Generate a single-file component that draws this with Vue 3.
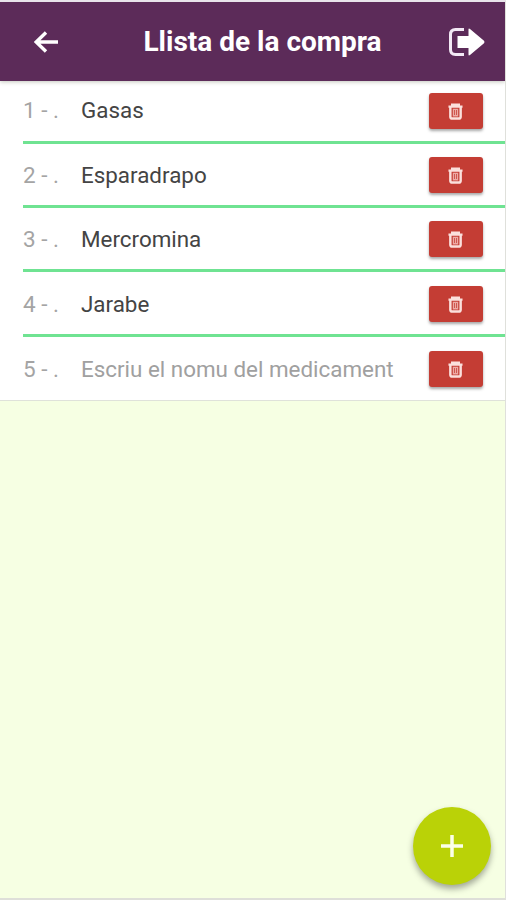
<template>
  <div class="page">
    <header class="toolbar">
      <button class="icon-button" aria-label="Enrere">
        <svg class="back" viewBox="0 0 24 22">
          <path d="M12 1.5 2.2 11 12 20.5M2.5 11H24" />
        </svg>
      </button>
      <h1 class="title">Llista de la compra</h1>
      <button class="icon-button" aria-label="Sortir">
        <svg class="exit" viewBox="0 0 36 28">
          <path class="door" d="M15 1.5H6.5Q1.5 1.5 1.5 6.5V21.5Q1.5 26.5 6.5 26.5H15" />
          <path class="arrow" d="M8.5 8H19.5V1.5Q19.5 0 21 1L35 12.8Q36 14 35 15.2L21 27Q19.5 28 19.5 26.5V20H8.5Z" />
        </svg>
      </button>
    </header>

    <ul class="list">
      <li class="item" v-for="(item, index) in items" :key="index">
        <span class="number">{{ index + 1 }} - .</span>
        <input class="name" v-model="item.name" placeholder="Escriu el nomu del medicament" />
        <button class="delete" aria-label="Esborrar" @click="removeItem(index)">
          <svg class="trash" viewBox="0 0 16 18">
            <path d="M0.5 3.8H15.5M4.5 3.5V1.7H11.5V3.5M2.5 4V14.5Q2.5 16.5 4.5 16.5H11.5Q13.5 16.5 13.5 14.5V4" />
            <path class="slats" d="M5.8 6.8V13.5H10.2V6.8ZM8 6.8V13.5" />
          </svg>
        </button>
      </li>
    </ul>

    <button class="fab" aria-label="Afegir" @click="addItem">
      <svg class="plus" viewBox="0 0 22 22">
        <path d="M11 0V22M0 11H22" />
      </svg>
    </button>
  </div>
</template>

<script setup>
import { ref } from 'vue'

const items = ref([
  { name: 'Gasas' },
  { name: 'Esparadrapo' },
  { name: 'Mercromina' },
  { name: 'Jarabe' },
  { name: '' }
])

const addItem = () => {
  items.value.push({ name: '' })
}

const removeItem = (index) => {
  items.value.splice(index, 1)
}
</script>

<style>
body {
  margin: 0;
}
</style>

<style scoped>
.page {
  position: relative;
  box-sizing: border-box;
  height: 900px;
  overflow: hidden;
  border-top: 2px solid #e9e4eb;
  border-right: 1px solid #dfe0db;
  border-bottom: 2px solid #dedfd9;
  background: #f6ffe3;
  font-family: Roboto, sans-serif;
}

button {
  padding: 0;
  border: 0;
  background: none;
  cursor: pointer;
}

svg {
  display: block;
}

.toolbar {
  position: relative;
  display: flex;
  align-items: center;
  justify-content: space-between;
  box-sizing: border-box;
  height: 79px;
  padding: 0 20px 0 34px;
  background: #5c2b59;
  box-shadow: 0 1px 4px rgba(60, 70, 40, 0.3);
}

.back {
  width: 24px;
  height: 22px;
  fill: none;
  stroke: #fff;
  stroke-width: 3.4;
}

.title {
  margin: 0 0 0 18px;
  color: #fff;
  font-size: 28px;
  font-weight: 700;
  white-space: nowrap;
}

.exit {
  width: 36px;
  height: 28px;
}

.door {
  fill: none;
  stroke: #f3e9f5;
  stroke-width: 3;
}

.arrow {
  fill: #fff;
}

.list {
  margin: 0;
  padding: 0;
  list-style: none;
  background: #fff;
  border-bottom: 1px solid #dfe2da;
}

.item {
  display: flex;
  align-items: center;
  box-sizing: border-box;
  height: 64.4px;
  margin-left: 23px;
  padding: 1.6px 22px 0 0;
  border-bottom: 3px solid #6fe392;
}

.item:first-child {
  height: 62.5px;
  padding-top: 0;
}

.item:first-child .number,
.item:first-child .name {
  padding-bottom: 2px;
}

.item:last-child {
  height: 63.3px;
  border-bottom: 0;
}

.number {
  width: 58px;
  color: #a4a4a4;
  font-size: 22.5px;
}

.name {
  flex: 1;
  min-width: 0;
  padding: 0;
  border: 0;
  outline: 0;
  background: none;
  color: #444;
  font-family: inherit;
  font-size: 22.4px;
}

.name::placeholder {
  color: #a0a0a0;
  opacity: 1;
}

.delete {
  display: flex;
  align-items: center;
  justify-content: center;
  box-sizing: border-box;
  width: 54px;
  height: 36px;
  padding: 1px 2px 0 0;
  border-radius: 3px;
  background: #c43d34;
  box-shadow: 0 2px 3px rgba(0, 0, 0, 0.35);
}

.trash {
  width: 15px;
  height: 17px;
  fill: none;
  stroke: #fbe0dc;
  stroke-width: 2.6;
}

.slats {
  stroke: #edaaa4;
  stroke-width: 1.4;
}

.fab {
  position: absolute;
  right: 14px;
  bottom: 13px;
  display: flex;
  align-items: center;
  justify-content: center;
  width: 78px;
  height: 78px;
  border-radius: 50%;
  background: #bad207;
  box-shadow: 0 4px 6px rgba(0, 0, 0, 0.34);
}

.plus {
  width: 22px;
  height: 22px;
  stroke: #fbffe9;
  stroke-width: 3.5;
}
</style>
